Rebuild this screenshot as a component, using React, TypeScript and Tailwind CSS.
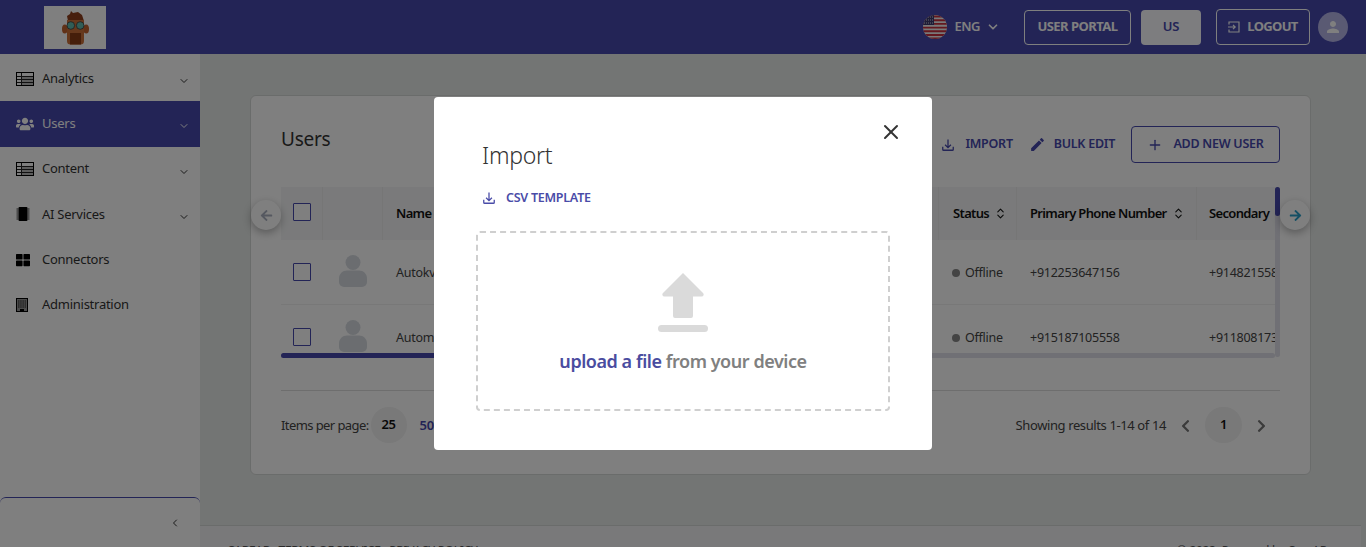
import { ChevronDown, ChevronLeft, ChevronsUpDown, Plus, X } from "lucide-react";
import { FaArrowLeft, FaArrowRight, FaChevronLeft, FaChevronRight, FaThLarge, FaUsers } from "react-icons/fa";
import { MdEdit, MdPerson } from "react-icons/md";

function TableIcon() {
  return (
    <svg width="18" height="14" viewBox="0 0 18 14" className="shrink-0">
      <rect x="0.5" y="0.5" width="17" height="13" fill="#fff" stroke="#000" />
      <path d="M1 4.5h16M1 7.5h16M1 10.5h16" stroke="#222" strokeWidth="1" />
      <path d="M5.5 1v12" stroke="#222" strokeWidth="1" />
      <path d="M6 5h11v2H6zM6 8h11v2H6zM6 11h11v2H6z" fill="#bbb" />
    </svg>
  );
}

function ChipIcon() {
  return (
    <svg width="14" height="14" viewBox="0 0 14 14" className="shrink-0">
      <rect x="2.5" y="0" width="9" height="14" rx="1" fill="#000" />
      <path d="M0.5 2h2M0.5 4h2M0.5 6h2M0.5 8h2M0.5 10h2M0.5 12h2M11.5 2h2M11.5 4h2M11.5 6h2M11.5 8h2M11.5 10h2M11.5 12h2" stroke="#333" strokeWidth="1" />
    </svg>
  );
}

function BuildingIcon() {
  return (
    <svg width="12" height="14" viewBox="0 0 12 14" className="shrink-0">
      <rect x="0.5" y="0.5" width="11" height="13" fill="#999" stroke="#000" />
      <path d="M2 3h8M2 5h8M2 7h8M2 9h8" stroke="#222" strokeWidth="1" strokeDasharray="1.5 0.7" />
      <rect x="4" y="11" width="4" height="3" fill="#000" />
    </svg>
  );
}

function DownloadTray({ className }: { className: string }) {
  return (
    <svg viewBox="0 0 24 24" fill="none" stroke="currentColor" strokeWidth="2.2" className={className}>
      <path d="M3 15v4.500a1.500 1.500 0 0 0 1.500 1.500h15a1.500 1.500 0 0 0 1.500-1.500V15" />
      <path d="M12 2.500V16M7 11.500l5 5 5-5" />
    </svg>
  );
}

function LogoutIcon() {
  return (
    <svg width="12" height="12" viewBox="0 0 12 12" fill="none" stroke="currentColor" strokeWidth="1.2">
      <path d="M1 3.500V1h10v10H1V8.500" />
      <path d="M0 6h7M5 3.800 7.200 6 5 8.200" />
    </svg>
  );
}

function Flag() {
  return (
    <svg width="24" height="24" viewBox="0 0 24 24" className="shrink-0">
      <clipPath id="flag">
        <circle cx="12" cy="12" r="12" />
      </clipPath>
      <g clipPath="url(#flag)">
        <rect width="24" height="24" fill="#f2f2f2" />
        <path d="M0 1.500h24M0 5.200h24M0 8.900h24M0 12.600h24M0 16.300h24M0 20h24M0 23.500h24" stroke="#c8313e" strokeWidth="1.900" />
        <rect width="11" height="10" fill="#3c3b6e" />
        <path d="M1 2h9M1 5h9M1 8h9" stroke="#cfd0e0" strokeWidth="1" strokeDasharray="1 1" />
      </g>
    </svg>
  );
}

function Logo() {
  return (
    <svg width="27" height="35" viewBox="0 0 27 35">
      <path d="M6 11 5 6l3-2 1-3 2 2 5-1 4 3 2 6-2 2H7z" fill="#8f3f1c" />
      <ellipse cx="2.800" cy="19" rx="2.800" ry="4.500" fill="#c2622e" />
      <ellipse cx="24.200" cy="19" rx="2.800" ry="4.500" fill="#c2622e" />
      <path d="M5 10h17v21a3.500 3.500 0 0 1-3.500 3.500h-10A3.500 3.500 0 0 1 5 31z" fill="#cd7038" />
      <path d="M8 23h11v11.500H8z" fill="#8a3d14" />
      <circle cx="8.800" cy="15.500" r="3.800" fill="#62bcae" stroke="#3b3b3b" strokeWidth="0.800" />
      <circle cx="18.200" cy="15.500" r="3.800" fill="#62bcae" stroke="#3b3b3b" strokeWidth="0.800" />
    </svg>
  );
}

function Avatar() {
  return (
    <svg width="28" height="32" viewBox="0 0 28 32" fill="#d6dbe1">
      <circle cx="14" cy="7.500" r="7.500" />
      <path d="M8 15.500h12c4.500 0 8 3.500 8 8V27a5 5 0 0 1-5 5H5a5 5 0 0 1-5-5v-3.500c0-4.500 3.500-8 8-8z" />
    </svg>
  );
}

function Checkbox() {
  return <span className="block h-[18px] w-[18px] rounded-[1px] border border-[#4648ac] bg-white" />;
}

const navItems = [
  { label: "Analytics", icon: <TableIcon />, chevron: true },
  { label: "Users", icon: <FaUsers className="h-[18px] w-[18px] text-white" />, chevron: true, active: true },
  { label: "Content", icon: <TableIcon />, chevron: true },
  { label: "AI Services", icon: <ChipIcon />, chevron: true },
  { label: "Connectors", icon: <FaThLarge className="h-[14px] w-[14px] text-black" /> },
  { label: "Administration", icon: <BuildingIcon /> },
];

const rows = [
  { name: "Autokv", primary: "+912253647156", secondary: "+914821558" },
  { name: "Autom", primary: "+915187105558", secondary: "+911808173" },
];

export default function App() {
  return (
    <div className="relative flex h-screen flex-col overflow-hidden bg-[#e6eae8] font-['Noto_Sans',sans-serif] text-[13px] tracking-[-0.02em]">
      <header className="flex h-[54px] shrink-0 items-center bg-[#4648ac] pl-[44px] pr-[18px] text-white">
        <div className="flex h-[43px] w-[62px] items-center justify-center bg-white">
          <Logo />
        </div>
        <div className="ml-auto flex items-center">
          <Flag />
          <span className="ml-2 text-[13px] font-semibold tracking-[-0.04em]">ENG</span>
          <ChevronDown className="ml-[6px] h-[14px] w-[14px]" strokeWidth={3} />
          <button className="ml-[24px] flex h-[35px] w-[107px] items-center justify-center rounded-[4px] border border-white text-[13px] font-bold tracking-[-0.04em]">USER PORTAL</button>
          <button className="ml-[10px] flex h-[35px] w-[60px] items-center justify-center rounded-[4px] bg-[#fafaff] text-[13px] font-semibold text-[#4648ac]">US</button>
          <button className="ml-[15px] flex h-[36px] w-[94px] items-center justify-center gap-[7px] rounded-[4px] border border-white text-[13px] font-bold tracking-[-0.05em]">
            <LogoutIcon />
            LOGOUT
          </button>
          <span className="ml-2 flex h-[30px] w-[30px] items-center justify-center rounded-full bg-[#b4b4e6]">
            <MdPerson className="h-[18px] w-[18px]" />
          </span>
        </div>
      </header>

      <div className="flex min-h-0 flex-1">
        <aside className="flex w-[200px] shrink-0 flex-col bg-white pt-[2px] text-[#333]">
          <nav className="flex-1">
            {navItems.map((item) => (
              <div key={item.label} className={`flex h-[45.25px] items-center pl-[16px] pr-[10px] ${item.active ? "bg-[#4648ac] text-white" : ""}`}>
                <span className="flex w-[26px] shrink-0 items-center">{item.icon}</span>
                <span>{item.label}</span>
                {item.chevron && <ChevronDown className="ml-auto mt-[5px] h-[12px] w-[12px]" strokeWidth={2} />}
              </div>
            ))}
          </nav>
          <div className="flex h-[50px] items-center justify-end rounded-t-[6px] border-t border-[#4648ac] pr-[19px]">
            <ChevronLeft className="h-[12px] w-[12px] text-[#333]" strokeWidth={2} />
          </div>
        </aside>

        <main className="flex min-w-0 flex-1 flex-col pt-[41px]">
          <section className="relative ml-[50px] h-[380px] w-[1061px] shrink-0 rounded-[6px] border border-[#d5d8d6] bg-white px-[30px]">
            <div className="flex h-[91px] items-start pt-[29px]">
              <h2 className="text-[19px] leading-[28px] text-[#333]">Users</h2>
              <div className="ml-auto mt-[1px] flex items-center font-semibold text-[#4648ac]">
                <DownloadTray className="h-[14px] w-[14px]" />
                <span className="ml-[10px] text-[12.500px]">IMPORT</span>
                <MdEdit className="ml-[16px] h-[17px] w-[17px]" />
                <span className="ml-[8px] text-[12.500px]">BULK EDIT</span>
                <button className="ml-[16px] flex h-[37px] w-[149px] items-center justify-center gap-[10px] rounded-[4px] border border-[#4648ac] text-[12.500px] font-semibold">
                  <Plus className="h-[16px] w-[16px]" strokeWidth={2} />
                  ADD NEW USER
                </button>
              </div>
            </div>

            <div className="relative h-[171px] w-[999px] overflow-hidden">
              <div className="flex h-[53px] w-[1100px] items-center bg-[#f4f5f6] font-semibold tracking-[-0.05em] text-[#111]">
                <div className="flex h-full w-[42px] items-center justify-center border-r border-[#ececec] pb-[3px]"><Checkbox /></div>
                <div className="h-full w-[60px] border-r border-[#ececec]" />
                <div className="flex h-full w-[556px] items-center border-r border-[#ececec] pl-[13px]">Name</div>
                <div className="flex h-full w-[78px] items-center border-r border-[#ececec] pl-[14px]">
                  Status
                  <ChevronsUpDown className="ml-[5px] h-[13px] w-[13px]" />
                </div>
                <div className="flex h-full w-[180px] items-center border-r border-[#ececec] pl-[13px]">
                  Primary Phone Number
                  <ChevronsUpDown className="ml-[5px] h-[13px] w-[13px]" />
                </div>
                <div className="flex h-full items-center pl-[12px]">Secondary</div>
              </div>
              {rows.map((row) => (
                <div key={row.name} className="flex h-[65px] w-[1100px] items-center border-b border-[#f0f0f0] text-[12.500px] text-[#444]">
                  <div className="flex w-[42px] justify-center"><Checkbox /></div>
                  <div className="flex w-[60px] justify-center pb-[3px]"><Avatar /></div>
                  <div className="w-[556px] pl-[13px] pt-[2px]">{row.name}</div>
                  <div className="flex w-[78px] items-center gap-[5px] pl-[13px] pt-[2px]">
                    <span className="h-[8px] w-[8px] rounded-full bg-[#888]" />
                    Offline
                  </div>
                  <div className="w-[180px] pl-[13px] pt-[2px]">{row.primary}</div>
                  <div className="pl-[12px] pt-[2px]">{row.secondary}</div>
                </div>
              ))}
              <div className="absolute bottom-0 left-0 h-[5px] w-[994px] rounded-full bg-[#e0e0ea]" />
              <div className="absolute bottom-0 left-0 h-[5px] w-[400px] rounded-full bg-[#4648ac]" />
              <div className="absolute right-0 top-0 h-[170px] w-[5px] rounded-full bg-[#e0e0ea]" />
              <div className="absolute right-0 top-0 h-[29px] w-[5px] rounded-full bg-[#4648ac]" />
            </div>

            <div className="mt-[32px] flex h-[70px] items-start border-t border-[#ddd] pr-[14px] pt-[25px] text-[#444]">
              <span className="tracking-[-0.045em]">Items per page:</span>
              <span className="ml-[2px] mt-[-9px] flex h-[36px] w-[36px] items-center justify-center rounded-full bg-[#f2f2f2] font-semibold text-[#111]">25</span>
              <span className="ml-[13px] font-semibold text-[#4648ac]">50</span>
              <span className="ml-auto tracking-[-0.03em]">Showing results 1-14 of 14</span>
              <FaChevronLeft className="ml-[15px] mt-[3px] h-[14px] w-[9px] text-[#777]" />
              <span className="ml-[15px] mt-[-9px] flex h-[36px] w-[37px] items-center justify-center rounded-full bg-[#f2f2f2] font-semibold text-[#111]">1</span>
              <FaChevronRight className="ml-[15px] mt-[3px] h-[14px] w-[9px] text-[#777]" />
            </div>

            <span className="absolute left-0 top-[104px] flex h-[30px] w-[30px] items-center justify-center rounded-full bg-white shadow-[0_3px_8px_rgba(0,0,0,0.3)]">
              <FaArrowLeft className="h-[13px] w-[13px] text-[#aab0c0]" />
            </span>
            <span className="absolute right-0 top-[104px] flex h-[30px] w-[30px] items-center justify-center rounded-full bg-white shadow-[0_3px_8px_rgba(0,0,0,0.3)]">
              <FaArrowRight className="h-[13px] w-[13px] text-[#2a9fc9]" />
            </span>
          </section>

          <footer className="mt-[50px] flex h-[30px] w-[1161px] shrink-0 justify-between border-t border-[#d5d8d6] bg-[#f2f3f5] pl-[27px] pr-[34px] pt-[16px] text-[12px] text-[#555]">
            <span>CAREAR &nbsp; TERMS OF SERVICE &nbsp; PRIVACY POLICY</span>
            <span>© 2023. Powered by CareAR</span>
          </footer>
        </main>
      </div>

      <div className="absolute inset-0 flex justify-center bg-black/50 pt-[97px]">
        <div className="relative h-[353px] w-[498px] rounded-[4px] bg-white px-[42px] pt-[41px]">
          <X className="absolute right-[29px] top-[23px] h-[24px] w-[24px] text-[#333]" strokeWidth={2} />
          <h3 className="pl-[6px] text-[23px] font-light leading-[34px] text-[#333]">Import</h3>
          <div className="mt-[17px] flex items-center pl-[6px] font-semibold text-[#4a4ca8]">
            <DownloadTray className="h-[14px] w-[14px]" />
            <span className="ml-[10px] text-[12.500px]">CSV TEMPLATE</span>
          </div>
          <div className="mt-[23px] flex h-[180px] w-[414px] flex-col items-center rounded-[4px] border-2 border-dashed border-[#cfcfcf] pt-[40px]">
            <svg width="50" height="60" viewBox="0 0 50 60" fill="#dadada">
              <path d="M25 0 45 20a2 2 0 0 1-1.500 3.500H35V43a2 2 0 0 1-2 2H17a2 2 0 0 1-2-2V23.500H6.500A2 2 0 0 1 5 20z" />
              <rect x="0" y="52" width="50" height="7" rx="3.500" />
            </svg>
            <p className="mt-[15px] text-[18px] font-semibold tracking-[-0.025em] text-[#808080]">
              <span className="text-[#4a4ca0]">upload a file</span> from your device
            </p>
          </div>
        </div>
      </div>
    </div>
  );
}
